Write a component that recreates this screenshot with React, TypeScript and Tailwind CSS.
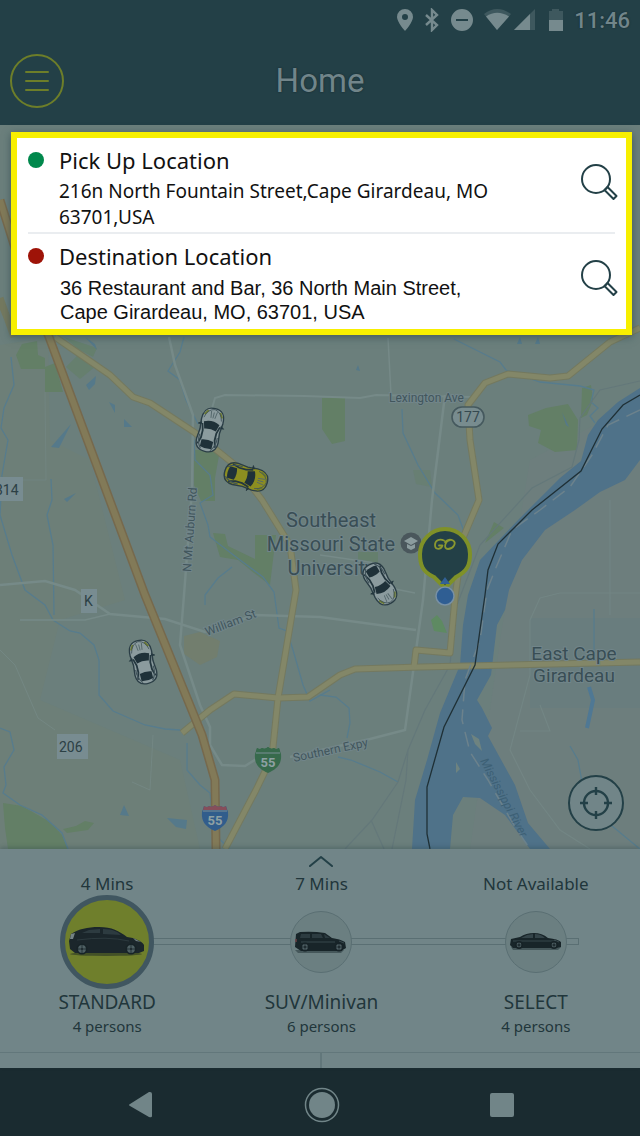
import React from "react";

const W = "stroke-[#768a88]";

function TopCar({ x, y, r, body }: { x: number; y: number; r: number; body: string }) {
  return (
    <g transform={`translate(${x} ${y}) rotate(${r})`}>
      <path d="M-11-9C-11-18-8-22 0-22S11-18 11-9L10 1 11 11C11 18 8 22 0 22S-11 18-11 11L-10 1Z" fill={body} stroke="#2b3e46" strokeWidth="1.4" />
      <path d="M-10-6L-13-4L-10-4ZM10-6L13-4L10-4Z" fill="#24373f" stroke="#24373f" strokeWidth=".8" />
      <path d="M-8-7Q0-11 8-7L6 0Q0-2-6 0Z" fill="#1f3139" />
      <path d="M-6 11Q0 9 6 11L6 18Q0 20-6 18Z" fill="#1f3139" />
      <path d="M-9-5L-7 2V9L-9 16M9-5L7 2V9L9 16" fill="none" stroke="#24373f" strokeWidth="1.8" />
      <path d="M-9 6Q-10 14-5 20M9 6Q10 14 5 20" fill="none" stroke="#41545b" strokeWidth="1.2" />
      <path d="M-3-19L-2-12M3-19L2-12M0-18V-12" fill="none" stroke="#54676b" strokeWidth=".9" />
      <path d="M-9-14L-6-19M9-14L6-19" stroke="#6c7a2d" strokeWidth="1.8" />
      <path d="M-9-11Q-7-20 0-21Q7-20 9-11" fill="none" stroke="#41545b" strokeWidth=".8" />
    </g>
  );
}

function Shield({ x, y, fill, top }: { x: number; y: number; fill: string; top: string }) {
  return (
    <g transform={`translate(${x} ${y})`}>
      <path d="M-11-12Q-8-10-6-12Q-3-10 0-13Q3-10 6-12Q8-10 11-12L13-6C14 4 9 9 0 13C-9 9-14 4-13-6Z" fill={fill} />
      <path d="M-11-12Q-8-10-6-12Q-3-10 0-13Q3-10 6-12Q8-10 11-12L12-8H-12Z" fill={top} />
      <path d="M-12-7H12" stroke="#7b8f95" />
      <text y="7" textAnchor="middle" fontSize="13" fontWeight="700" fill="#8ea0a3">55</text>
    </g>
  );
}

function CityMap() {
  return (
    <svg className="absolute inset-0 h-full w-full" viewBox="0 125 640 724" preserveAspectRatio="xMidYMid slice" fontFamily="Roboto, sans-serif" role="img" aria-label="Map of Cape Girardeau">
      <rect y="125" width="640" height="724" fill="#6b7f7c" />
      <path d="M0 345L48 337L50 440L90 460L125 600L60 620L40 700L180 760L200 849H0Z" fill="#6d7f78" />
      <path d="M530 460L640 400V849H470L500 640Z" fill="#6d7e7d" />
      <path d="M530 618H640V708H530Z" fill="#697d7e" />
      <g fill="#637f66">
        <path d="M22 344L37 341L38 355L45 358V369H21L16 355Z" />
        <path d="M45 367L55 363L63 392H45Z" />
        <path d="M66 367L81 352L96 366L80 379Z" opacity=".6" />
        <path d="M64 337L97 348L93 357L78 349Z" opacity=".7" />
        <path d="M194 450H220L215 478V501H201L194 485Z" />
        <path d="M213 533L225 534L228 546L255 559V535H276L270 585L254 573L238 560L220 557Z" />
        <path d="M322 398L345 397L345 441L332 444L322 429Z" />
        <path d="M528 415L546 408L568 404L578 420L577 450L555 452L538 443L541 430L529 426Z" />
        <path d="M582 388L591 385L593 400L587 415L581 418Z" />
        <path d="M485 543L494 522L504 528Z" />
        <path d="M413 470L430 470L432 487L416 484Z" opacity=".4" />
        <path d="M3 803L22 806L50 822L62 835L68 849H8L5 828Z" />
        <path d="M63 829L76 826L85 821L94 823L88 830L67 833Z" />
        <path d="M358 552H378V563L358 559Z" opacity=".7" />
      </g>
      <path d="M431 620L437 615L442 621L447 633L434 631Z" fill="#5e8a62" />
      <path d="M184 636L200 632L220 641L217 657L200 665L184 654Z" fill="#727e6e" />
      <g fill="#55798a">
        <path d="M51 447L71 424L59 448Z" />
        <path d="M86 385L96 376L95 384L89 390Z" />
        <path d="M109 402L115 405V413Z" />
        <path d="M124 419L132 427H124Z" />
        <path d="M64 499L76 493L67 502Z" />
        <path d="M120 815L124 805L129 816Z" />
        <path d="M167 818L187 820L186 829L176 827Z" />
        <path d="M85 337L95 344L97 350Z" />
        <path d="M517 344L520 337L522 344ZM535 344L538 337L540 344Z" />
        <path d="M356 370l2-5 2 6Z" />
        <path d="M562 412L569 427L566 425Z" />
      </g>
      <path d="M640 388L618 402L598 420L588 435L581 461L560 478L520 518L480 560L468 595L463 625L460 665L440 713L427 760L415 800L412 849H450L453 815L463 797L480 798L505 815L530 849H550L528 823L515 785L488 736L492 728L482 708L477 700L491 675L497 625L505 610L509 590L522 560L545 530L575 510L600 492L625 480L640 460Z" fill="#4f7289" />
      <path d="M471 734L479 739L482 751L475 744ZM456 762L460 769L456 773Z" fill="#6e8380" />
      <g fill="none" stroke="#577c8d" strokeWidth="1.3">
        <path d="M11 357L14 385L4 408L1 428L8 440L2 475L0 515L12 555L25 590L45 605L53 620L70 631L80 633L94 645L99 660V695L113 711L145 725L165 729L180 730" />
        <path d="M51 479L52 500L47 515L53 545L54 615" />
        <path d="M184 337L180 352L168 371L180 380L186 400L198 424" />
        <path d="M194 440L195 460L210 475L213 495L200 503L208 525L210 537L240 560L263 577L274 592L279 628L287 631L293 650L303 685L310 701L330 690" />
        <path d="M232 567L218 578L205 595L205 605" />
        <path d="M454 339L480 352L500 362L506 370L540 382L580 386L594 390L591 402L598 408L590 416L595 423" />
        <path d="M402 409L403 433L418 465L435 493L458 515L466 537" />
        <path d="M594 609V658M570 746L578 760L582 782L600 816L640 849" />
        <path d="M0 728L10 732L14 750L4 767L6 785L3 793L20 805L42 815L62 833L68 849" />
        <path d="M187 743L187 770L200 785L210 793L215 835L230 849" />
        <path d="M320 695L336 697L349 708L350 723L347 738M338 757L351 760L380 772L398 782" />
      </g>
      <path d="M589 687L593 700L587 728" fill="none" stroke="#4f7894" strokeWidth="4" />
      <g fill="none" className={W} strokeWidth="2.5">
        <path d="M169 337L175 365L193 415L192 490L184 595L180 645L200 705L210 727V745L222 765L245 766L258 758" />
        <path d="M210 415L215 398L225 395L305 396L360 398L376 395L472 397" strokeWidth="2" />
        <path d="M445 395L432 500L423 600L405 730L370 739L290 757" />
        <path d="M0 585L45 581L75 590L110 614L165 619L205 632L225 625L255 615L320 617L416 630" />
        <path d="M20 620H85L110 614" strokeWidth="1.5" />
        <path d="M388 338L391 395" strokeWidth="1.5" />
        <path d="M45 392L46 480H0" strokeWidth="1" opacity=".5" />
        <path d="M0 650L15 665L38 718L55 730M153 735L150 790L132 782" strokeWidth="1" opacity=".7" />
        <path d="M530 620L540 598L560 593H640M610 500V615M530 620V675L510 750L530 790L560 830L590 849M540 705L550 731H520" strokeWidth="1.2" opacity=".6" />
        <path d="M320 555L375 563L390 588L415 593" strokeWidth="1.5" />
      </g>
      <g fill="none" stroke="#64787a" strokeWidth="1.2">
        <path d="M640 381L600 390L580 418L579 440L572 467L532 488L480 545L455 610L450 665L425 710L408 750L398 782L372 820L345 849M408 750L406 780L392 849M371 820L384 849" />
      </g>
      <g fill="none" strokeLinejoin="round">
        <g stroke="#74795f" strokeWidth="7">
          <path d="M55 337L110 375L133 397L150 403L194 432L235 465L262 500L290 545L296 590L278 698L272 757L256 790L225 849" />
          <path d="M182 733L210 710L234 694L278 698L308 697L340 675L355 669L420 667L640 662" />
          <path d="M640 328L610 342L568 376L550 378L508 374L485 383L468 405L470 440L479 500L463 538L455 598L450 653L416 650L414 667" />
          <path d="M0 300L10 325M0 298L14 337" />
        </g>
        <g stroke="#838768" strokeWidth="5">
          <path d="M55 337L110 375L133 397L150 403L194 432L235 465L262 500L290 545L296 590L278 698L272 757L256 790L225 849" />
          <path d="M182 733L210 710L234 694L278 698L308 697L340 675L355 669L420 667L640 662" />
          <path d="M640 328L610 342L568 376L550 378L508 374L485 383L468 405L470 440L479 500L463 538L455 598L450 653L416 650L414 667" />
        </g>
        <path d="M0 200L22 270L49 337L145 595L202 735L215 780L216 849" stroke="#76694d" strokeWidth="9" />
        <path d="M0 200L22 270L49 337L145 595L202 735L215 780L216 849" stroke="#827a58" strokeWidth="6" />
      </g>
      <path d="M640 410L608 425L592 455L570 487L540 510L512 530L495 570L487 590L480 640L465 680L462 720L470 752L488 780L515 827L530 849" fill="none" stroke="#6c828c" strokeWidth="1.5" strokeDasharray="15 8" />
      <path d="M640 395L623 405L602 429L581 471L532 510L498 544L488 570L485 595L475 665L444 727L427 787V834L430 849" fill="none" stroke="#1f3036" strokeWidth="1.3" />

      <g fill="#788c91">
        <rect x="-8" y="477" width="31" height="24" />
        <rect x="81" y="589" width="16" height="24" />
        <rect x="57" y="734" width="31" height="25" />
      </g>
      <g fill="#2c4045" fontSize="14">
        <text x="-5" y="495">314</text>
        <text x="84" y="606">K</text>
        <text x="59" y="752">206</text>
      </g>
      <g fill="#394e55" fontSize="20" textAnchor="middle" stroke="#71858a" strokeWidth="2" paintOrder="stroke">
        <text x="331" y="527">Southeast</text>
        <text x="331" y="551">Missouri State</text>
        <text x="331" y="575">University</text>
        <text x="574" y="660" fontSize="19">East Cape</text>
        <text x="574" y="682" fontSize="19">Girardeau</text>
      </g>
      <g fill="#41565c" fontSize="12" stroke="#71858a" strokeWidth="2" paintOrder="stroke">
        <text x="389" y="402">Lexington Ave</text>
        <text transform="translate(191 572) rotate(-86)">N Mt Auburn Rd</text>
        <text transform="translate(207 636) rotate(-21)">William St</text>
        <text transform="translate(294 762) rotate(-12)">Southern Expy</text>
      </g>
      <text transform="translate(480 761) rotate(62)" fontSize="12" fill="#3d6075" fontStyle="italic">Mississippi River</text>
      <rect x="452" y="407" width="32" height="20" rx="10" fill="#788c8f" stroke="#45595e" strokeWidth="1.6" />
      <text x="468" y="422" textAnchor="middle" fontSize="14" fill="#354950">177</text>
      <Shield x={268} y={760} fill="#376a4c" top="#376a4c" />
      <Shield x={215} y={818} fill="#315d8c" top="#864e5a" />

      <circle cx="411" cy="543" r="10.5" fill="#4a575c" />
      <path d="M404 541L411 537L418 541L411 545ZM407 544V548L411 550L415 548V544L411 546Z" fill="#8b9c9e" />
      <TopCar x={210} y={430} r={14} body="#8b9b9e" />
      <TopCar x={246} y={477} r={106} body="#8c8e20" />
      <TopCar x={380} y={584} r={150} body="#8b9b9e" />
      <TopCar x={143} y={662} r={-14} body="#8b9b9e" />
      <path d="M445 588L434 577C422 572 420 564 420 554A25 25 0 0 1 470 554C470 564 468 571 456 577Z" fill="#234047" stroke="#7f9128" strokeWidth="4" />
      <g fill="none" stroke="#8a982f" strokeWidth="1.8" strokeLinecap="round" strokeLinejoin="round">
        <path d="M444 540.500C439 538 435 541 435 545C435 550 441 550 442.500 545.500H439" />
        <path d="M450 540C445 541 443 549 448 549C453 549 457 543 453 540.500C450 539 447 540 445 542" />
      </g>
      <path d="M440 584L445 577L450 584Z" fill="#326197" />
      <circle cx="445" cy="596" r="9" fill="#2f5e93" stroke="#7790a5" strokeWidth="1.5" />
    </svg>
  );
}

function SearchIcon() {
  return (
    <svg className="size-10" viewBox="0 0 40 40" fill="none" stroke="#234047" aria-hidden="true">
      <circle cx="17" cy="17" r="14" strokeWidth="2" />
      <path d="M25.500 28L28.500 25L37.500 34L34.500 37Z" strokeWidth="2" strokeLinejoin="round" />
    </svg>
  );
}

function Location({ title, dot, children, label }: { title: string; dot: string; children: React.ReactNode; label: string }) {
  return (
    <section className="flex pt-1 pb-0.5">
      <span className={`mt-2.5 size-4 shrink-0 rounded-full ${dot}`} />
      <div className="ml-[15px] min-w-0 flex-1">
        <h2 className="text-[22px] leading-9">{title}</h2>
        {children}
      </div>
      <button type="button" aria-label={label} className="mt-5 -mr-1 size-10 shrink-0">
        <SearchIcon />
      </button>
    </section>
  );
}

function Wheel({ x, y, r }: { x: number; y: number; r: number }) {
  return (
    <g>
      <circle cx={x} cy={y} r={r} fill="#172327" />
      <circle cx={x} cy={y} r={r - 1.6} fill="#4e5f63" />
      <path d={`M${x - r + 1} ${y}H${x + r - 1}M${x} ${y - r + 1}V${y + r - 1}`} stroke="#1c292d" strokeWidth=".8" />
      <circle cx={x} cy={y} r="1" fill="#1c292d" />
    </g>
  );
}

function Hatchback() {
  return (
    <svg className="w-20" viewBox="0 0 80 32" aria-hidden="true">
      <ellipse cx="39" cy="28" rx="36" ry="2" fill="#435127" />
      <path d="M4 8C12 3 20 1 32 1C45 1 52 5 60 11C68 12 75 15 77 19V25L72 27H8L3 23L2 15Z" fill="#1b262b" />
      <path d="M15 7L22 4L33 3V7ZM36 3C46 3 51 6 54 9L36 8Z" fill="#2d3b40" />
      <path d="M4 8L8 7L6 13L3 13ZM66 12L74 16L69 15Z" fill="#748285" />
      <path d="M10 14Q40 10 62 15" fill="none" stroke="#344246" strokeWidth=".7" />
      <Wheel x={15} y={23} r={5.5} />
      <Wheel x={64} y={23} r={5.5} />
    </svg>
  );
}

function Suv() {
  return (
    <svg className="w-14" viewBox="0 0 56 24" aria-hidden="true">
      <path d="M2 20H51L48 23H5Z" fill="#45575a" />
      <path d="M3 4L7 2Q20 1 32 3L39 8Q47 9 52 12L53 18L48 21H8L2 17Z" fill="#182529" />
      <path d="M8 4H17V8H7ZM19 4H28L30 8H19ZM31 4L37 8H32Z" fill="#2c3b40" />
      <path d="M3 9V12" stroke="#6b4044" strokeWidth="1.5" />
      <path d="M46 11L51 13M8 12H42" stroke="#45565b" strokeWidth=".7" />
      <Wheel x={12} y={17} r={4.5} />
      <Wheel x={46} y={17} r={4.5} />
    </svg>
  );
}

function Sedan() {
  return (
    <svg className="w-14" viewBox="0 0 56 24" aria-hidden="true">
      <path d="M3 17H53L50 20H5Z" fill="#45575a" />
      <path d="M3 9L12 7Q18 3 26 3Q34 3 40 8Q50 9 53 12L53 17L48 18H5L2 15Z" fill="#182529" />
      <path d="M13 8L19 5L25 4V8ZM27 4Q33 4 37 8H27Z" fill="#344449" />
      <path d="M5 11H48M46 10L51 12" stroke="#45565b" strokeWidth=".7" />
      <Wheel x={11} y={15} r={4} />
      <Wheel x={46} y={15} r={4} />
    </svg>
  );
}

function Vehicle({ time, name, seats, selected = false, children }: { time: string; name: string; seats: string; selected?: boolean; children: React.ReactNode }) {
  return (
    <button type="button" aria-pressed={selected} className="relative flex flex-col items-center text-[#21363b]">
      <span className="text-[17px] leading-[22px]">{time}</span>
      <span className="flex h-[94px] items-center">
        {selected ? (
          <span className="flex size-[94px] items-center justify-center rounded-full border-[5px] border-[#405660] bg-[#6f7f2c]">{children}</span>
        ) : (
          <span className="flex size-[62px] items-center justify-center rounded-full border border-[#5a6f73] bg-[#6b7f81]">{children}</span>
        )}
      </span>
      <span className="text-[19px] leading-[26px]">{name}</span>
      <span className="text-[15px] leading-[22px]">{seats}</span>
    </button>
  );
}

export default function App() {
  return (
    <div className="flex min-h-screen flex-col overflow-x-hidden bg-[#718588] font-['Noto_Sans',sans-serif]">
      <header className="bg-[#234047] text-[#71858a]">
        <div className="flex h-10 items-center justify-end pr-2.5">
          <svg className="h-6 w-[172px]" viewBox="0 0 172 24" fill="#768a8e" aria-hidden="true">
            <path fillRule="evenodd" d="M9 1A8 8 0 0 0 1 9C1 14 9 23 9 23S17 14 17 9A8 8 0 0 0 9 1ZM9 6A3 3 0 1 1 9 12A3 3 0 0 1 9 6Z" />
            <path d="M30 7L41 17L36 22V2L41 7L30 17" fill="none" stroke="#768a8e" strokeWidth="2.4" />
            <path fillRule="evenodd" d="M66 1A11 11 0 1 1 66 23A11 11 0 0 1 66 1ZM60 11V13H72V11Z" />
            <path d="M88 6Q101-4 115 6L101 22Z" fill="#3e585e" />
            <path d="M90 8.500Q101 1 113 8.500L101 22Z" />
            <path d="M118 22L139 1V22Z" fill="#3e585e" />
            <path d="M118 22L134 6V22Z" />
            <path d="M153 3H156V1H163V3H167V12H153Z" fill="#3e585e" />
            <path d="M153 12H167V23H153Z" />
          </svg>
          <time className="ml-1.5 font-['Roboto',sans-serif] text-[22px] font-medium [text-shadow:0_0_2px_#14262c]">11:46</time>
        </div>
        <div className="grid h-[85px] grid-cols-[1fr_auto_1fr] items-center px-2.5 pb-[3px]">
          <button type="button" aria-label="Open menu" className="flex size-[54px] items-center justify-center rounded-full border-2 border-[#6d7e29]">
            <svg className="w-6" viewBox="0 0 24 20" fill="none" stroke="#6d7e29" strokeWidth="2" strokeLinecap="round"><path d="M1 1H23M1 10H23M1 19H23" /></svg>
          </button>
          <h1 className="font-['Roboto',sans-serif] text-[33px] [text-shadow:0_0_2px_#14262c]">Home</h1>
        </div>
      </header>

      <main className="relative flex flex-1 flex-col justify-between">
        <CityMap />
        <div className="relative mt-[7px] mr-2 ml-[11px] border-[6px] border-[#f7ef00] bg-white px-[11px] pb-[3px] text-[#111] shadow-[0_2px_8px_rgba(35,64,71,0.6)]">
          <Location title="Pick Up Location" dot="bg-[#00884c]" label="Search pick up location">
            <p className="pr-16 text-[19px] leading-[26px]">216n North Fountain Street,Cape Girardeau, MO 63701,USA</p>
          </Location>
          <hr className="border-t-2 border-[#eaedf0]" />
          <Location title="Destination Location" dot="bg-[#9e1308]" label="Search destination location">
            <p className="pt-0.5 pr-24 pl-px font-['Liberation_Sans',sans-serif] text-[20px] leading-6">36 Restaurant and Bar, 36 North Main Street, Cape Girardeau, MO, 63701, USA</p>
          </Location>
        </div>
        <button type="button" aria-label="Center map on my location" className="relative mr-4 mb-[18px] flex size-14 items-center justify-center self-end rounded-full border-2 border-[#234047] bg-[#718588]">
          <svg className="size-8" viewBox="0 0 32 32" fill="none" stroke="#234047" strokeWidth="2.4"><circle cx="16" cy="16" r="12" /><path d="M16 0V8M16 24V32M0 16H8M24 16H32" /></svg>
        </button>
      </main>

      <section className="relative shadow-[0_-2px_4px_rgba(35,64,71,0.3)]">
        <button type="button" aria-label="Expand ride options" className="flex h-6 w-full items-center justify-center pl-0.5">
          <svg className="w-6" viewBox="0 0 24 12" fill="none" stroke="#234047" strokeWidth="2" strokeLinecap="round" strokeLinejoin="round"><path d="M1 11L12 2L23 11" /></svg>
        </button>
        <div className="relative -mr-[3px] grid grid-cols-3 pb-[15px]">
          <div className="absolute top-[65px] right-[10%] left-[17%] h-[7px] border border-[#5a6f73]" />
          <Vehicle time="4 Mins" name="STANDARD" seats="4 persons" selected><Hatchback /></Vehicle>
          <Vehicle time="7 Mins" name="SUV/Minivan" seats="6 persons"><Suv /></Vehicle>
          <Vehicle time="Not Available" name="SELECT" seats="4 persons"><Sedan /></Vehicle>
        </div>
        <div className="grid h-4 grid-cols-2 border-t border-[#62777b] pl-[3px]">
          <div className="border-r-2 border-[#62777b]" />
        </div>
      </section>

      <nav className="grid h-[68px] grid-cols-[1fr_auto_1fr] items-center bg-[#1a2b30] pt-1.5 pr-[126px] pl-[129px]" aria-label="System navigation">
        <button type="button" aria-label="Back" className="justify-self-start">
          <svg className="h-[26px] w-6" viewBox="0 0 24 26" fill="#718588"><path d="M21 0Q23 0 23 2V24Q23 26 20 25L1 14Q-1 13 1 12L20 0Z" /></svg>
        </button>
        <button type="button" aria-label="Home">
          <svg className="size-9" viewBox="0 0 36 36" fill="#718588"><circle cx="18" cy="18" r="13" /><circle cx="18" cy="18" r="16.500" fill="none" stroke="#718588" strokeWidth="1.5" /></svg>
        </button>
        <button type="button" aria-label="Recent apps" className="size-6 justify-self-end rounded-xs bg-[#718588]" />
      </nav>
    </div>
  );
}
